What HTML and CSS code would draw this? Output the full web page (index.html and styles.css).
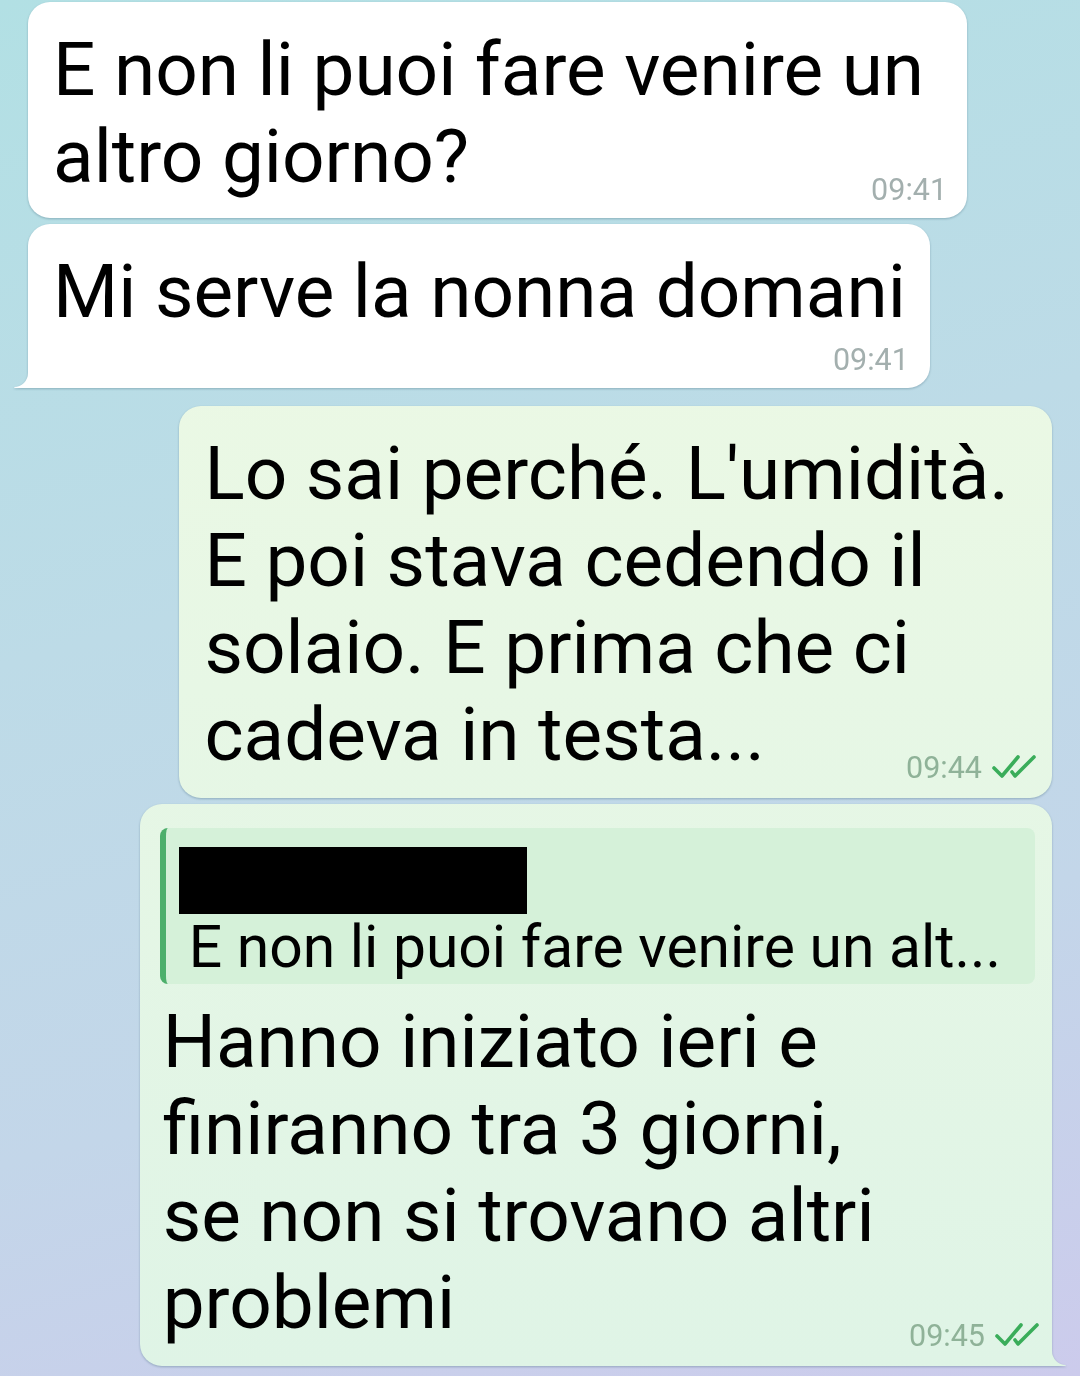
FILE: index.html
```html
<!DOCTYPE html>
<html lang="it">
<head>
    <meta charset="UTF-8">
    <meta name="viewport" content="width=device-width, initial-scale=1.0">

    <title>Chat</title>

    <link rel="stylesheet" href="styles.css">

</head>
<body>

    <div id="chat">

        <div class="msg in">
            <div class="bubble wrapped">
                <p class="text">E non li puoi fare venire un<br>altro giorno?</p>
                <div class="meta inline"><span class="time">09:41</span></div>
            </div>
        </div>

        <div class="msg in">
            <div class="bubble tail-left">
                <p class="text">Mi serve la nonna domani</p>
                <div class="meta below"><span class="time">09:41</span></div>
                <svg class="tail" width="16" height="24" viewBox="0 0 16 24">
                    <path d="M0 23 A14 14 0 0 0 14 9 L14 0 L16 0 L16 24 L2 24 Q0 24 0 23 Z" fill="#ffffff"/>
                </svg>
            </div>
        </div>

        <div class="msg out group">
            <div class="bubble wrapped">
                <p class="text">Lo sai perché. L'umidità.<br>E poi stava cedendo il<br>solaio. E prima che ci<br>cadeva in testa...</p>
                <div class="meta inline">
                    <span class="time">09:44</span>
                    <svg class="checks" width="44" height="24" viewBox="0 0 44 24">
                        <path d="M2 13 L10 21 L26 2" />
                        <path d="M20 17 L23 21 L42 2" />
                    </svg>
                </div>
            </div>
        </div>

        <div class="msg out">
            <div class="bubble tail-right">
                <div class="reply">
                    <div class="reply-name"></div>
                    <div class="reply-text">E non li puoi fare venire un alt...</div>
                </div>
                <p class="text after-reply">Hanno iniziato ieri e<br>finiranno tra 3 giorni,<br>se non si trovano altri<br>problemi</p>
                <div class="meta inline">
                    <span class="time">09:45</span>
                    <svg class="checks" width="44" height="24" viewBox="0 0 44 24">
                        <path d="M2 13 L10 21 L26 2" />
                        <path d="M20 17 L23 21 L42 2" />
                    </svg>
                </div>
                <svg class="tail" width="16" height="24" viewBox="0 0 16 24">
                    <path d="M16 23 A14 14 0 0 1 2 9 L2 0 L0 0 L0 24 L14 24 Q16 24 16 23 Z" fill="#e0f5e5"/>
                </svg>
            </div>
        </div>

    </div>

</body>
</html>
```

FILE: styles.css
```css
html, body {
    margin: 0;
    height: 1376px;
    overflow: hidden;
}
body {
    font-family: Roboto, "Noto Sans", sans-serif;
    background: linear-gradient(165deg, #b2e0e4 0%, #bddbe7 40%, #c3d6e9 70%, #cccbec 100%);
}
#chat {
    display: flex;
    flex-direction: column;
    gap: 6px;
    padding: 2px 28px 0 28px;
}
.msg {
    display: flex;
}
.msg.in {
    justify-content: flex-start;
}
.msg.out {
    justify-content: flex-end;
}
.msg.group {
    margin-top: 12px;
}
.bubble {
    position: relative;
    display: flex;
    flex-direction: column;
    padding: 24px 24px 10px 25px;
    border-radius: 22px;
    background: #ffffff;
    filter: drop-shadow(0 1px 1px rgba(50, 90, 110, 0.35));
}
.msg.out .bubble {
    background: linear-gradient(#effae4, #dff4e6) fixed;
    padding-right: 17px;
    padding-bottom: 12px;
}
.msg.in .bubble.wrapped {
    padding-right: 43px;
}
.msg.out .bubble.wrapped {
    padding-right: 43px;
}
.bubble.tail-left {
    border-bottom-left-radius: 0;
}
.bubble.tail-right {
    border-bottom-right-radius: 0;
    padding-left: 20px;
    padding-right: 21px;
}
.tail {
    position: absolute;
    bottom: 0;
}
.tail-left .tail {
    left: -14px;
}
.tail-right .tail {
    right: -14px;
}
.text {
    margin: 0;
    font-size: 74.7px;
    line-height: 87px;
    color: #000000;
    white-space: nowrap;
}
.text.after-reply {
    margin-top: 14px;
    margin-left: 3px;
}
.meta {
    align-self: flex-end;
    display: flex;
    align-items: center;
    gap: 10px;
    font-size: 30.5px;
    line-height: 36px;
    color: #a3afae;
}
.msg.out .meta {
    color: #8fb298;
}
.msg.in .wrapped .meta {
    margin-right: -23px;
}
.msg.in .tail-left .meta {
    margin-right: -3px;
}
.msg.out .wrapped .meta {
    margin-right: -27px;
}
.tail-right .meta {
    margin-right: -4px;
}
.meta.inline {
    margin-top: -28px;
}
.meta.below {
    margin-top: 7px;
}
.checks {
    fill: none;
    stroke: #3aad5a;
    stroke-width: 3.6;
    stroke-linecap: round;
    stroke-linejoin: round;
    margin-top: -2px;
}
.reply {
    background: #d5f1d9;
    border-left: 6px solid #4caf6b;
    border-radius: 8px;
    padding: 19px 34px 4px 23px;
}
.reply-name {
    width: 348px;
    height: 67px;
    margin-left: -10px;
    background: #000000;
}
.reply-text {
    font-size: 58.8px;
    line-height: 66px;
    color: #000000;
    white-space: nowrap;
}
```
